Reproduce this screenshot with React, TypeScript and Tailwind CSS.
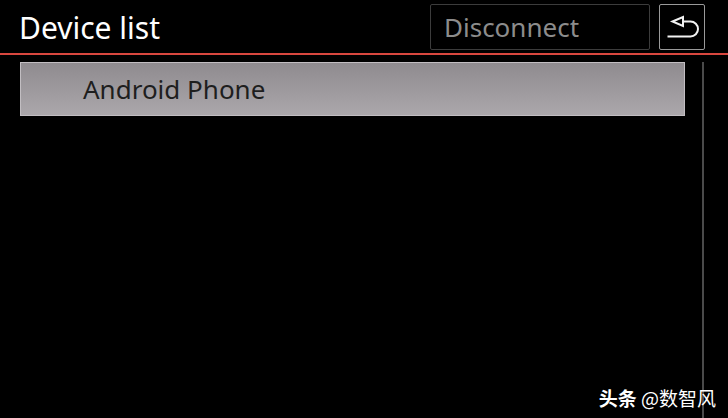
import React from 'react';

const BackIcon: React.FC = () => (
  <svg width="44" height="44" viewBox="0 0 44 44" fill="none" stroke="#f2f2f2" strokeWidth="2" strokeLinejoin="miter">
    <path d="M12.5 16.5 L23 12 L23 21 Z" />
    <path d="M23 16.5 H30.5 A7.5 7.5 0 0 1 30.5 31.5 H7.5" />
  </svg>
);

export default function App() {
  return (
    <div
      className="w-[728px] h-[418px] bg-black relative overflow-hidden"
      style={{ fontFamily: '"Noto Sans", "Noto Sans CJK SC", sans-serif' }}
    >
      {/* Header */}
      <div className="h-[53px] flex items-center pl-[19px] pr-[23px]">
        <h1 className="text-[30px] leading-none text-white flex-1 pt-[3px]">Device list</h1>
        <button className="w-[220px] h-[46px] mt-[1px] border border-[#3c3c3c] rounded-[2px] text-left pl-[13px] text-[26px] text-[#8c8c8c] leading-none">
          Disconnect
        </button>
        <button className="ml-[9px] w-[46px] h-[46px] mt-[1px] border border-[#9a9a9a] rounded-[2px] flex items-center justify-center">
          <BackIcon />
        </button>
      </div>
      <div className="h-[2px] bg-[#d9473f]" />

      {/* List */}
      <div className="flex pt-[7px] pl-[20px]">
        <div className="w-[665px] flex flex-col">
          <div className="h-[54px] border border-[#c2bec2] bg-gradient-to-b from-[#8f8b8f] to-[#aba7ab] flex items-center pl-[62px]">
            <span className="text-[26px] text-[#1e1e1e] leading-none">Android Phone</span>
          </div>
        </div>
        <div className="ml-[17px] w-[2px] h-[360px] bg-[#4a4a4a]" />
      </div>

      {/* Watermark */}
      <div className="absolute right-[12px] bottom-[11px] text-[19px] text-white leading-none font-['Noto_Sans_CJK_SC',sans-serif]">
        <span className="font-bold">头条</span> @数智风
      </div>
    </div>
  );
}
